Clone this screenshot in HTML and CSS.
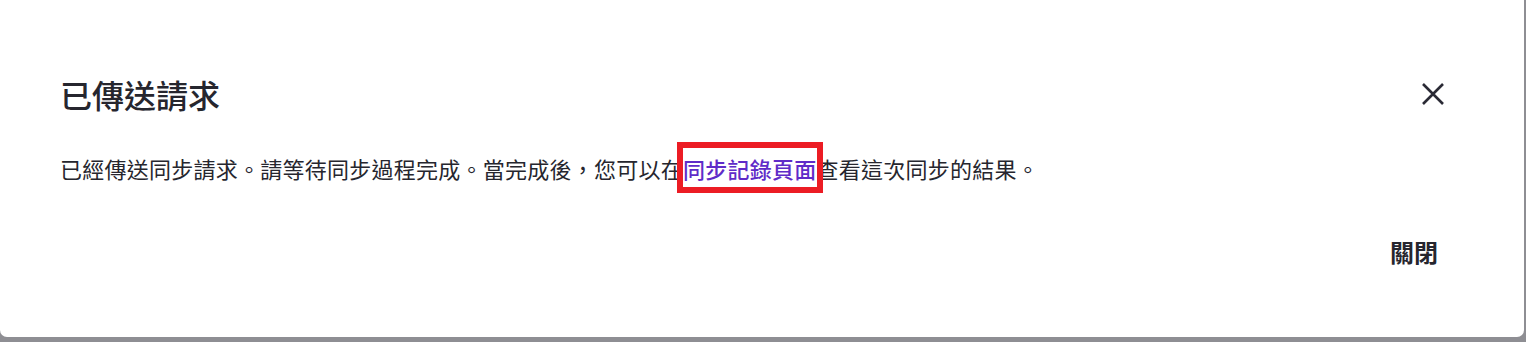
FILE: index.html
```html
<!DOCTYPE html>
<html lang="zh-Hant">
<head>
<meta charset="utf-8">
<title>已傳送請求</title>
<link rel="stylesheet" href="styles.css">
</head>
<body>
<div class="dialog">
  <div class="dialog-header">
    <h2 class="dialog-title">已傳送請求</h2>
    <button class="close-btn" aria-label="關閉">
      <svg width="22" height="22" viewBox="0 0 22 22"><path d="M1 1L21 21M21 1L1 21" stroke="#2a2a35" stroke-width="2.6" stroke-linecap="butt" fill="none"/></svg>
    </button>
  </div>
  <p class="dialog-body">已經傳送同步請求。請等待同步過程完成。當完成後，您可以在<a class="link" href="#">同步記錄頁面</a>查看這次同步的結果。</p>
  <div class="dialog-footer">
    <button class="text-btn">關閉</button>
  </div>
</div>
</body>
</html>
```
FILE: styles.css
```css
html, body {
  margin: 0;
  padding: 0;
}
body {
  background: #8e8e93;
  font-family: "Noto Sans CJK TC", "Noto Sans", sans-serif;
  color: #26262e;
  height: 342px;
  overflow: hidden;
}
.dialog {
  background: #ffffff;
  height: 337px;
  width: 1524px;
  border-radius: 0 0 7px 7px;
  box-sizing: border-box;
  padding: 73px 60px 0 60px;
}
.dialog-header {
  display: flex;
  align-items: center;
  justify-content: space-between;
  height: 42px;
}
.dialog-title {
  margin: 0;
  font-size: 32px;
  font-weight: 500;
  line-height: 42px;
  color: #26262e;
}
.close-btn {
  background: none;
  border: none;
  padding: 0;
  margin-right: 20px;
  width: 22px;
  height: 22px;
  display: flex;
  cursor: pointer;
}
.dialog-body {
  margin: 37px 0 0 0;
  font-size: 22px;
  line-height: 32px;
  letter-spacing: 0.25px;
  color: #26262e;
}
.link {
  color: #5f2bc8;
  font-weight: 500;
  text-decoration: none;
  padding: 4px 0 3px 0;
  outline: 6.5px solid #ec1c24;
  outline-offset: 0;
}
.dialog-footer {
  display: flex;
  justify-content: flex-end;
  margin-top: 52px;
}
.text-btn {
  background: none;
  border: none;
  padding: 0;
  margin-right: 26px;
  font-family: "Noto Sans CJK TC", "Noto Sans", sans-serif;
  font-size: 24px;
  font-weight: 700;
  line-height: 32px;
  color: #26262e;
  cursor: pointer;
}
```
